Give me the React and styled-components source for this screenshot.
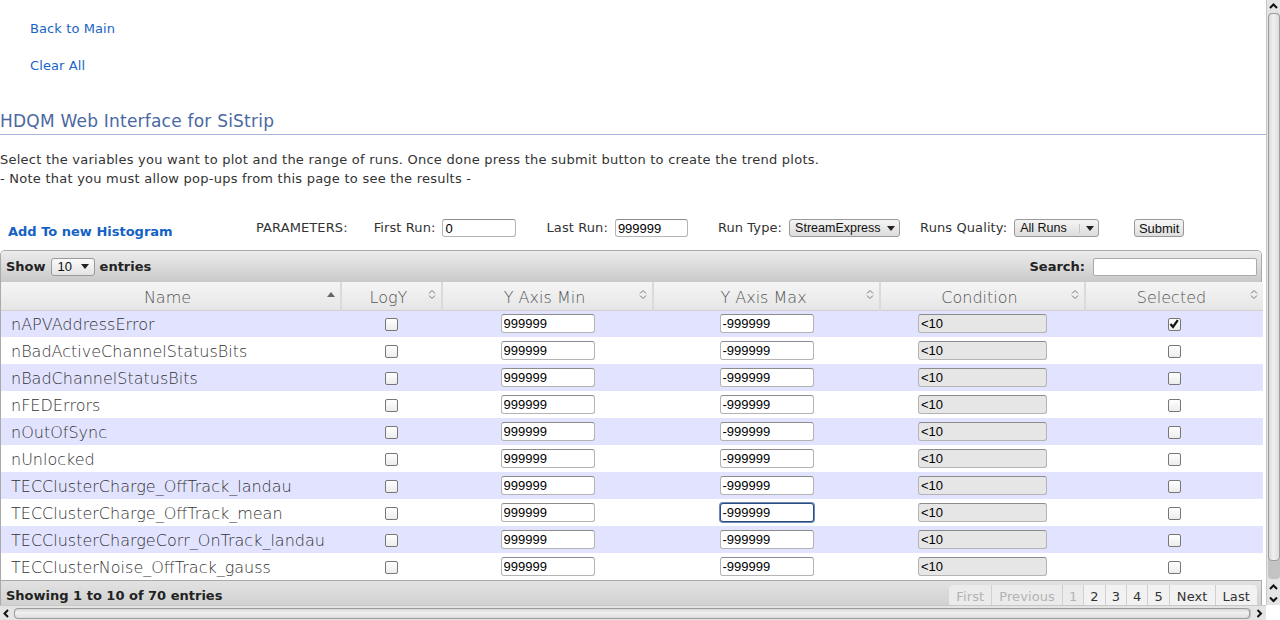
import React from "react";
import styled, { createGlobalStyle } from "styled-components";

const Global = createGlobalStyle`
  html, body { margin: 0; padding: 0; background: #fff; }
  body { font-family: "DejaVu Sans", Verdana, sans-serif; font-size: 13px; color: #333; overflow: hidden; }
`;

const Shell = styled.div`
  width: 1280px;
  height: 620px;
  display: grid;
  grid-template-columns: 1266px 14px;
  grid-template-rows: 605px 15px;
  overflow: hidden;
`;

const Main = styled.div`
  overflow: hidden;
  min-width: 0;
`;

const Nav = styled.nav`
  display: flex;
  flex-direction: column;
  align-items: flex-start;
  gap: 19px;
  padding: 20px 0 0 30px;
`;

const NavLink = styled.a`
  display: block;
  font-size: 13px;
  line-height: 18px;
  letter-spacing: 0.1px;
  color: #1a64c8;
  text-decoration: none;
`;

const Heading = styled.h2`
  margin: 35px 0 0;
  padding: 0 0 2px;
  font-size: 17px;
  line-height: 22px;
  letter-spacing: 0.22px;
  font-weight: normal;
  color: #4a68a2;
  border-bottom: 1px solid #a6b5d9;
`;

const Intro = styled.p`
  margin: 15px 0 0;
  font-size: 13px;
  line-height: 19px;
  letter-spacing: 0.24px;
  color: #333;
`;

const ControlRow = styled.div`
  display: flex;
  align-items: flex-start;
  margin-top: 30px;
  height: 32px;
  padding-left: 8px;
`;

const AddLink = styled.a`
  flex: 0 0 248px;
  padding-top: 6px;
  font-size: 13px;
  line-height: 16px;
  font-weight: bold;
  color: #1562c4;
  text-decoration: none;
`;

const Params = styled.div`
  display: flex;
  align-items: center;
  height: 20px;
`;

const Label = styled.span`
  margin-left: ${p => p.$ml || 0}px;
  margin-right: ${p => p.$mr || 7}px;
  font-size: 13px;
  line-height: 18px;
  letter-spacing: 0.1px;
  color: #333;
  white-space: nowrap;
`;

const TextBox = styled.input`
  box-sizing: border-box;
  width: ${p => p.$w}px;
  height: 18px;
  padding: 0 2px;
  margin: 0;
  border: 1px solid #b4b4b4;
  border-top-color: #8c8c8c;
  border-radius: 3px;
  background: ${p => (p.disabled ? "#e6e6e6" : "#fff")};
  font-family: "Liberation Sans", Arial, sans-serif;
  font-size: 13px;
  color: #000;
  outline: none;
  ${p => p.$focus && `
    border: 1px solid #2c4b7c;
    box-shadow: 0 0 0 1px #6789bb;
  `}
`;

const FakeSelect = styled.span`
  box-sizing: border-box;
  display: inline-flex;
  align-items: center;
  justify-content: space-between;
  width: ${p => p.$w}px;
  height: 18px;
  padding: 0 4px 0 5px;
  border: 1px solid #9a9a9a;
  border-radius: 3px;
  background: linear-gradient(#f4f4f4, #dcdcdc);
  font-family: "Liberation Sans", Arial, sans-serif;
  font-size: 12.5px;
  color: #111;
  white-space: nowrap;
  overflow: hidden;
`;

const SelectTail = styled.span`
  display: inline-flex;
  align-items: center;
  gap: 6px;
`;

const Divider = styled.span`
  width: 1px;
  height: 9px;
  background: #c4c4c4;
`;

const Button = styled.button`
  box-sizing: border-box;
  margin-left: 35px;
  width: 50px;
  height: 18px;
  padding: 0;
  border: 1px solid #999;
  border-radius: 3px;
  background: linear-gradient(#f6f6f6, #dedede);
  font-family: "Liberation Sans", Arial, sans-serif;
  font-size: 13px;
  color: #111;
`;

const Arrow = () => (
  <svg width="8" height="5" viewBox="0 0 8 5">
    <path d="M0 0h8L4 5z" fill="#222" />
  </svg>
);

const TableBox = styled.div`
  width: 1262px;
  box-sizing: border-box;
  border: 1px solid #aaa;
  border-bottom: none;
  border-radius: 5px 5px 0 0;
`;

const Toolbar = styled.div`
  height: 31px;
  display: flex;
  align-items: center;
  justify-content: space-between;
  padding: 0 4px 0 5px;
  background: linear-gradient(#ececec, #c9c9c9);
  border-radius: 4px 4px 0 0;
  font-weight: bold;
  font-size: 13px;
  color: #222;
  ${p => p.$footer && `
    height: 26px;
    border-top: 1px solid #aaa;
    border-radius: 0;
    align-items: flex-start;
    padding-top: 4px;
    background: linear-gradient(#e2e2e2, #cdcdcd);
  `}
`;

const ToolGroup = styled.div`
  display: flex;
  align-items: center;
  gap: 5px;
  ${p => p.$footerText && `line-height: 17px; padding-top: 2px;`}
`;

const LenSelect = styled.span`
  box-sizing: border-box;
  display: inline-flex;
  align-items: center;
  justify-content: space-between;
  width: 44px;
  height: 18px;
  padding: 0 5px 0 6px;
  border: 1px solid #9a9a9a;
  border-radius: 3px;
  background: linear-gradient(#fafafa, #e4e4e4);
  font-family: "Liberation Sans", Arial, sans-serif;
  font-weight: normal;
  font-size: 13px;
  color: #111;
`;

const SearchBox = styled.input`
  box-sizing: border-box;
  width: 164px;
  height: 18px;
  margin: 0 0 0 3px;
  border: 1px solid #aaa;
  border-radius: 2px;
  background: #fff;
  outline: none;
`;

const Table = styled.table`
  width: 100%;
  border-collapse: collapse;
  table-layout: fixed;
  font-family: "DejaVu Sans ExtraLight", "DejaVu Sans", sans-serif;
  font-weight: 200;
  font-size: 16px;
`;

const Th = styled.th`
  position: relative;
  width: ${p => p.$w}px;
  height: 28px;
  padding: 3px 16px 0 10px;
  box-sizing: border-box;
  font-weight: 200;
  color: #555;
  text-align: center;
  background: linear-gradient(#f5f5f5, #e6e6e6);
  border-right: 2px solid #dadada;
  border-bottom: 1px solid #cfcfcf;
  &:last-child { border-right: none; }
`;

const SortIcon = styled.span`
  position: absolute;
  right: 5px;
  top: 6px;
  width: 8px;
  height: 12px;
  display: flex;
  align-items: center;
  justify-content: center;
`;

const Tr = styled.tr`
  background: ${p => (p.$odd ? "#e2e4ff" : "#fff")};
`;

const Td = styled.td`
  height: 27px;
  padding: ${p => (p.$left ? "2px 0 0 10px" : "0")};
  box-sizing: border-box;
  text-align: ${p => (p.$left ? "left" : "center")};
  vertical-align: middle;
  color: #333;
  white-space: nowrap;
  overflow: hidden;
  line-height: 18px;
`;

const CellInput = styled(TextBox)`
  vertical-align: middle;
  height: 19px;
`;

const Check = styled.span`
  display: inline-flex;
  align-items: center;
  justify-content: center;
  box-sizing: border-box;
  width: 13px;
  height: 13px;
  vertical-align: middle;
  border: 1px solid #777;
  border-radius: 2px;
  background: linear-gradient(#ffffff, #ececec);
`;

const Pager = styled.div`
  display: flex;
  height: 22px;
  margin-top: 0;
`;

const PageBtn = styled.span`
  display: flex;
  align-items: center;
  height: 22px;
  padding: 0 ${p => p.$pad || 7}px;
  border-left: 1px solid #d0d0d0;
  background: ${p => (p.$off ? "#ebebeb" : "#f2f2f2")};
  color: ${p => (p.$off ? "#b3b3b3" : "#333")};
  font-family: "DejaVu Sans", sans-serif;
  font-weight: normal;
  font-size: 13px;
  letter-spacing: 0.1px;
  ${p => p.$first && `border-left: none; border-radius: 4px 0 0 0;`}
  ${p => p.$last && `border-radius: 0 4px 0 0;`}
`;

const VBar = styled.div`
  grid-column: 2;
  grid-row: 1;
  display: flex;
  flex-direction: column;
  align-items: center;
  background: #e4e4e4;
  border-left: 1px solid #c8c8c8;
  box-sizing: border-box;
`;

const ArrowCell = styled.span`
  display: flex;
  align-items: center;
  justify-content: center;
  width: 13px;
  height: ${p => p.$h || 12}px;
  flex: 0 0 auto;
`;

const VTrack = styled.div`
  flex: 1;
  width: 12px;
  display: flex;
  flex-direction: column;
  background: #c3c3c3;
  border-radius: 4px;
  margin: 1px 0 2px;
`;

const VThumb = styled.div`
  height: ${p => p.$h}px;
  box-sizing: border-box;
  border: 1px solid #9c9c9c;
  border-radius: 4px;
  background: linear-gradient(90deg, #d8d8d8, #f0f0f0 40%, #dedede);
`;

const HBar = styled.div`
  grid-column: 1;
  grid-row: 2;
  display: flex;
  align-items: center;
  background: #e4e4e4;
  border-top: 1px solid #c8c8c8;
  box-sizing: border-box;
`;

const HTrack = styled.div`
  flex: 1;
  height: 11px;
  display: flex;
  background: #c3c3c3;
  border-radius: 4px;
  margin: 0 2px 0 1px;
`;

const HThumb = styled.div`
  width: ${p => p.$w}px;
  box-sizing: border-box;
  border: 1px solid #9c9c9c;
  border-radius: 4px;
  background: linear-gradient(#d8d8d8, #f0f0f0 40%, #dedede);
`;

const Corner = styled.div`
  grid-column: 2;
  grid-row: 2;
  background: #fff;
`;

const Chevron = ({ dir }) => {
  const d = {
    up: "M1 5l3.5-3.5L8 5",
    down: "M1 1.5L4.5 5 8 1.5",
    left: "M5 1L1.5 4.5 5 8",
    right: "M1.5 1L5 4.5 1.5 8",
  }[dir];
  const vert = dir === "up" || dir === "down";
  return (
    <svg width={vert ? 9 : 7} height={vert ? 7 : 9} viewBox={vert ? "0 0 9 7" : "0 0 7 9"}>
      <path d={d} fill="none" stroke="#111" strokeWidth="2" />
    </svg>
  );
};

const SortBoth = () => (
  <svg width="8" height="11" viewBox="0 0 8 11">
    <path d="M1 4.5L4 1.5 7 4.5M1 6.5L4 9.5 7 6.5" fill="none" stroke="#777" strokeWidth="1" />
  </svg>
);

const SortAsc = () => (
  <svg width="8" height="5" viewBox="0 0 8 5">
    <path d="M0 5L4 0 8 5z" fill="#666" />
  </svg>
);

const Tick = () => (
  <svg width="10" height="10" viewBox="0 0 10 10">
    <path d="M1.5 5l2.5 3L8.8 1.2" fill="none" stroke="#111" strokeWidth="2.2" />
  </svg>
);

const columns = [
  { name: "Name", w: 340, asc: true },
  { name: "LogY", w: 101 },
  { name: "Y Axis Min", w: 211 },
  { name: "Y Axis Max", w: 227 },
  { name: "Condition", w: 205 },
  { name: "Selected", w: 178 },
];

const rows = [
  "nAPVAddressError",
  "nBadActiveChannelStatusBits",
  "nBadChannelStatusBits",
  "nFEDErrors",
  "nOutOfSync",
  "nUnlocked",
  "TECClusterCharge_OffTrack_landau",
  "TECClusterCharge_OffTrack_mean",
  "TECClusterChargeCorr_OnTrack_landau",
  "TECClusterNoise_OffTrack_gauss",
];

const pages = [
  { t: "First", off: true, first: true },
  { t: "Previous", off: true },
  { t: "1", off: true, pad: 6 },
  { t: "2", pad: 6 },
  { t: "3", pad: 6 },
  { t: "4", pad: 6 },
  { t: "5", pad: 6 },
  { t: "Next" },
  { t: "Last", last: true },
];

export default function App() {
  return (
    <>
      <Global />
      <Shell>
        <Main>
          <Nav>
            <NavLink href="#">Back to Main</NavLink>
            <NavLink href="#">Clear All</NavLink>
          </Nav>
          <Heading>HDQM Web Interface for SiStrip</Heading>
          <Intro>
            Select the variables you want to plot and the range of runs. Once done press the submit button to create the trend plots.
            <br />- Note that you must allow pop-ups from this page to see the results -
          </Intro>
          <ControlRow>
            <AddLink href="#">Add To new Histogram</AddLink>
            <Params>
              <Label $mr={26}>PARAMETERS:</Label>
              <Label>First Run:</Label>
              <TextBox $w={74} defaultValue="0" />
              <Label $ml={30}>Last Run:</Label>
              <TextBox $w={73} defaultValue="999999" />
              <Label $ml={30}>Run Type:</Label>
              <FakeSelect $w={111}>
                StreamExpress
                <Arrow />
              </FakeSelect>
              <Label $ml={20}>Runs Quality:</Label>
              <FakeSelect $w={85}>
                All Runs
                <SelectTail>
                  <Divider />
                  <Arrow />
                </SelectTail>
              </FakeSelect>
              <Button>Submit</Button>
            </Params>
          </ControlRow>
          <TableBox>
            <Toolbar>
              <ToolGroup>
                Show
                <LenSelect>
                  10
                  <Arrow />
                </LenSelect>
                entries
              </ToolGroup>
              <ToolGroup>
                Search:
                <SearchBox />
              </ToolGroup>
            </Toolbar>
            <Table>
              <thead>
                <tr>
                  {columns.map(c => (
                    <Th key={c.name} $w={c.w}>
                      {c.name}
                      <SortIcon>{c.asc ? <SortAsc /> : <SortBoth />}</SortIcon>
                    </Th>
                  ))}
                </tr>
              </thead>
              <tbody>
                {rows.map((r, i) => (
                  <Tr key={r} $odd={i % 2 === 0}>
                    <Td $left>{r}</Td>
                    <Td>
                      <Check />
                    </Td>
                    <Td>
                      <CellInput $w={94} defaultValue="999999" />
                    </Td>
                    <Td>
                      <CellInput $w={94} defaultValue="-999999" $focus={i === 7} />
                    </Td>
                    <Td>
                      <CellInput $w={129} defaultValue="<10" disabled />
                    </Td>
                    <Td>
                      <Check>{i === 0 && <Tick />}</Check>
                    </Td>
                  </Tr>
                ))}
              </tbody>
            </Table>
            <Toolbar $footer>
              <ToolGroup $footerText>Showing 1 to 10 of 70 entries</ToolGroup>
              <Pager>
                {pages.map(p => (
                  <PageBtn key={p.t} $off={p.off} $first={p.first} $last={p.last} $pad={p.pad}>
                    {p.t}
                  </PageBtn>
                ))}
              </Pager>
            </Toolbar>
          </TableBox>
        </Main>
        <VBar>
          <ArrowCell $h={12}>
            <Chevron dir="up" />
          </ArrowCell>
          <VTrack>
            <VThumb $h={548} />
          </VTrack>
          <ArrowCell $h={12}>
            <Chevron dir="up" />
          </ArrowCell>
          <ArrowCell $h={12}>
            <Chevron dir="down" />
          </ArrowCell>
        </VBar>
        <HBar>
          <ArrowCell>
            <Chevron dir="left" />
          </ArrowCell>
          <HTrack>
            <HThumb $w={1236} />
          </HTrack>
          <ArrowCell>
            <Chevron dir="right" />
          </ArrowCell>
        </HBar>
        <Corner />
      </Shell>
    </>
  );
}
